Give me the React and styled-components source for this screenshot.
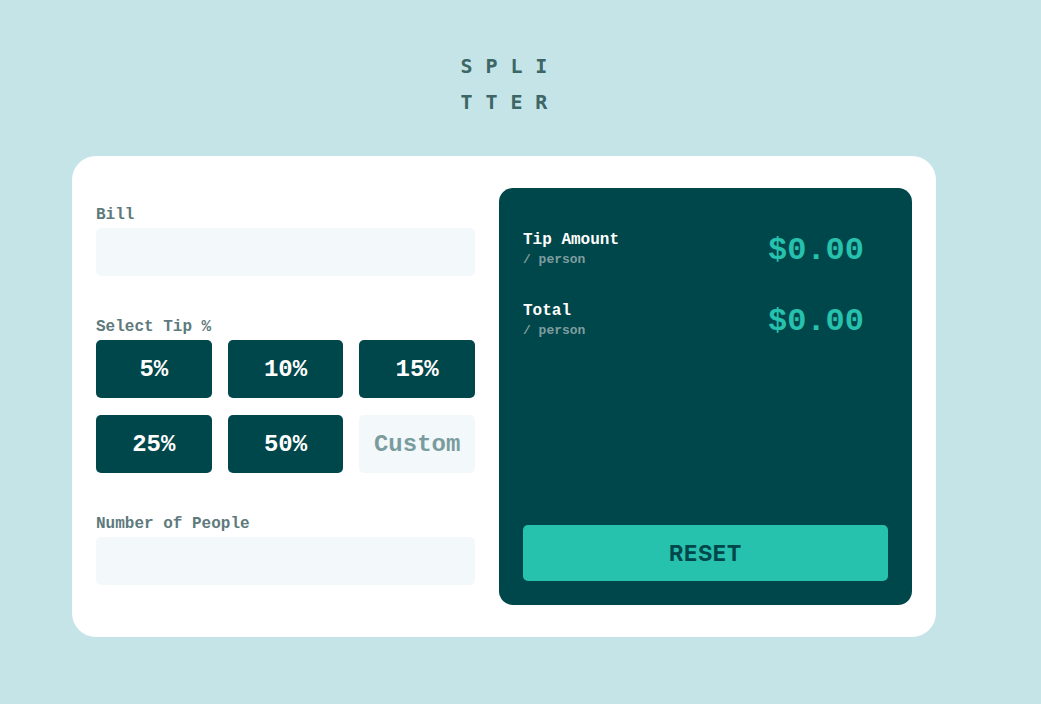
import React from 'react'
import styled, { createGlobalStyle } from 'styled-components';

const GlobalStyle = createGlobalStyle`
    * { box-sizing: border-box; }
    body {
        margin: 0;
        background: #c5e4e7;
        font-family: "Liberation Mono", "DejaVu Sans Mono", monospace;
    }
`;

const tips = ['5%', '10%', '15%', '25%', '50%'];

function App() {
    return (
        <Page>
            <GlobalStyle />
            <Logo>SPLITTER</Logo>
            <Card>
                <Inputs>
                    <Field>
                        <Label>Bill</Label>
                        <TextInput />
                    </Field>
                    <Field>
                        <Label>Select Tip %</Label>
                        <TipGrid>
                            {tips.map(t => <TipButton key={t}>{t}</TipButton>)}
                            <CustomInput placeholder="Custom" />
                        </TipGrid>
                    </Field>
                    <Field>
                        <Label>Number of People</Label>
                        <TextInput />
                    </Field>
                </Inputs>
                <Results>
                    <ResultRow>
                        <div>
                            <ResultTitle>Tip Amount</ResultTitle>
                            <ResultSub>/ person</ResultSub>
                        </div>
                        <Amount>$0.00</Amount>
                    </ResultRow>
                    <ResultRow>
                        <div>
                            <ResultTitle>Total</ResultTitle>
                            <ResultSub>/ person</ResultSub>
                        </div>
                        <Amount>$0.00</Amount>
                    </ResultRow>
                    <ResetButton>RESET</ResetButton>
                </Results>
            </Card>
        </Page>
    )
}

const Page = styled.main`
    display: flex;
    flex-direction: column;
    align-items: center;
    padding: 48px 33px 0 0;
    min-height: 704px;
`;

const Logo = styled.h1`
    margin: 0 0 36px 13px;
    width: 100px;
    word-break: break-all;
    color: #3d6666;
    font-family: "DejaVu Sans Mono", monospace;
    font-size: 20px;
    font-weight: 700;
    letter-spacing: 12.9px;
    line-height: 36px;
`;

const Card = styled.section`
    width: 864px;
    background: #fff;
    border-radius: 24px;
    padding: 32px 24px;
    display: grid;
    grid-template-columns: 379px 413px;
    gap: 24px;
`;

const Inputs = styled.div`
    display: flex;
    flex-direction: column;
    gap: 38px;
    padding-top: 14px;
`;

const Field = styled.div`
    display: flex;
    flex-direction: column;
`;

const Label = styled.label`
    color: #5e7a7d;
    font-size: 16px;
    font-weight: 700;
    line-height: 26px;
`;

const TextInput = styled.input`
    height: 48px;
    border: none;
    border-radius: 5px;
    background: #f3f8fb;
    outline: none;
`;

const TipGrid = styled.div`
    display: grid;
    grid-template-columns: repeat(3, 1fr);
    column-gap: 16px;
    row-gap: 17px;
`;

const TipButton = styled.button`
    height: 58px;
    border: none;
    border-radius: 5px;
    background: #00474b;
    color: #fff;
    font-family: inherit;
    font-size: 24px;
    font-weight: 700;
`;

const CustomInput = styled.input`
    height: 58px;
    width: 100%;
    border: none;
    border-radius: 5px;
    background: #f3f8fb;
    text-align: center;
    font-family: inherit;
    font-size: 24px;
    font-weight: 700;
    outline: none;
    &::placeholder { color: #7a9c9e; }
`;

const Results = styled.div`
    background: #00474b;
    border-radius: 14px;
    padding: 42px 24px 24px;
    height: 417px;
    display: flex;
    flex-direction: column;
    gap: 31px;
`;

const ResultRow = styled.div`
    display: flex;
    justify-content: space-between;
    align-items: center;
    padding-right: 24px;
`;

const ResultTitle = styled.div`
    color: #fff;
    font-size: 16px;
    font-weight: 700;
    line-height: 20px;
`;

const ResultSub = styled.div`
    color: #7f9d9f;
    font-size: 13px;
    font-weight: 700;
    line-height: 20px;
`;

const Amount = styled.div`
    color: #26c2ae;
    font-size: 32px;
    font-weight: 700;
`;

const ResetButton = styled.button`
    margin-top: auto;
    height: 56px;
    border: none;
    border-radius: 5px;
    background: #26c2ae;
    color: #00474b;
    font-family: Inter, "Liberation Sans", sans-serif;
    font-size: 22px;
    font-weight: 700;
    letter-spacing: 0.5px;
`;

export default App
